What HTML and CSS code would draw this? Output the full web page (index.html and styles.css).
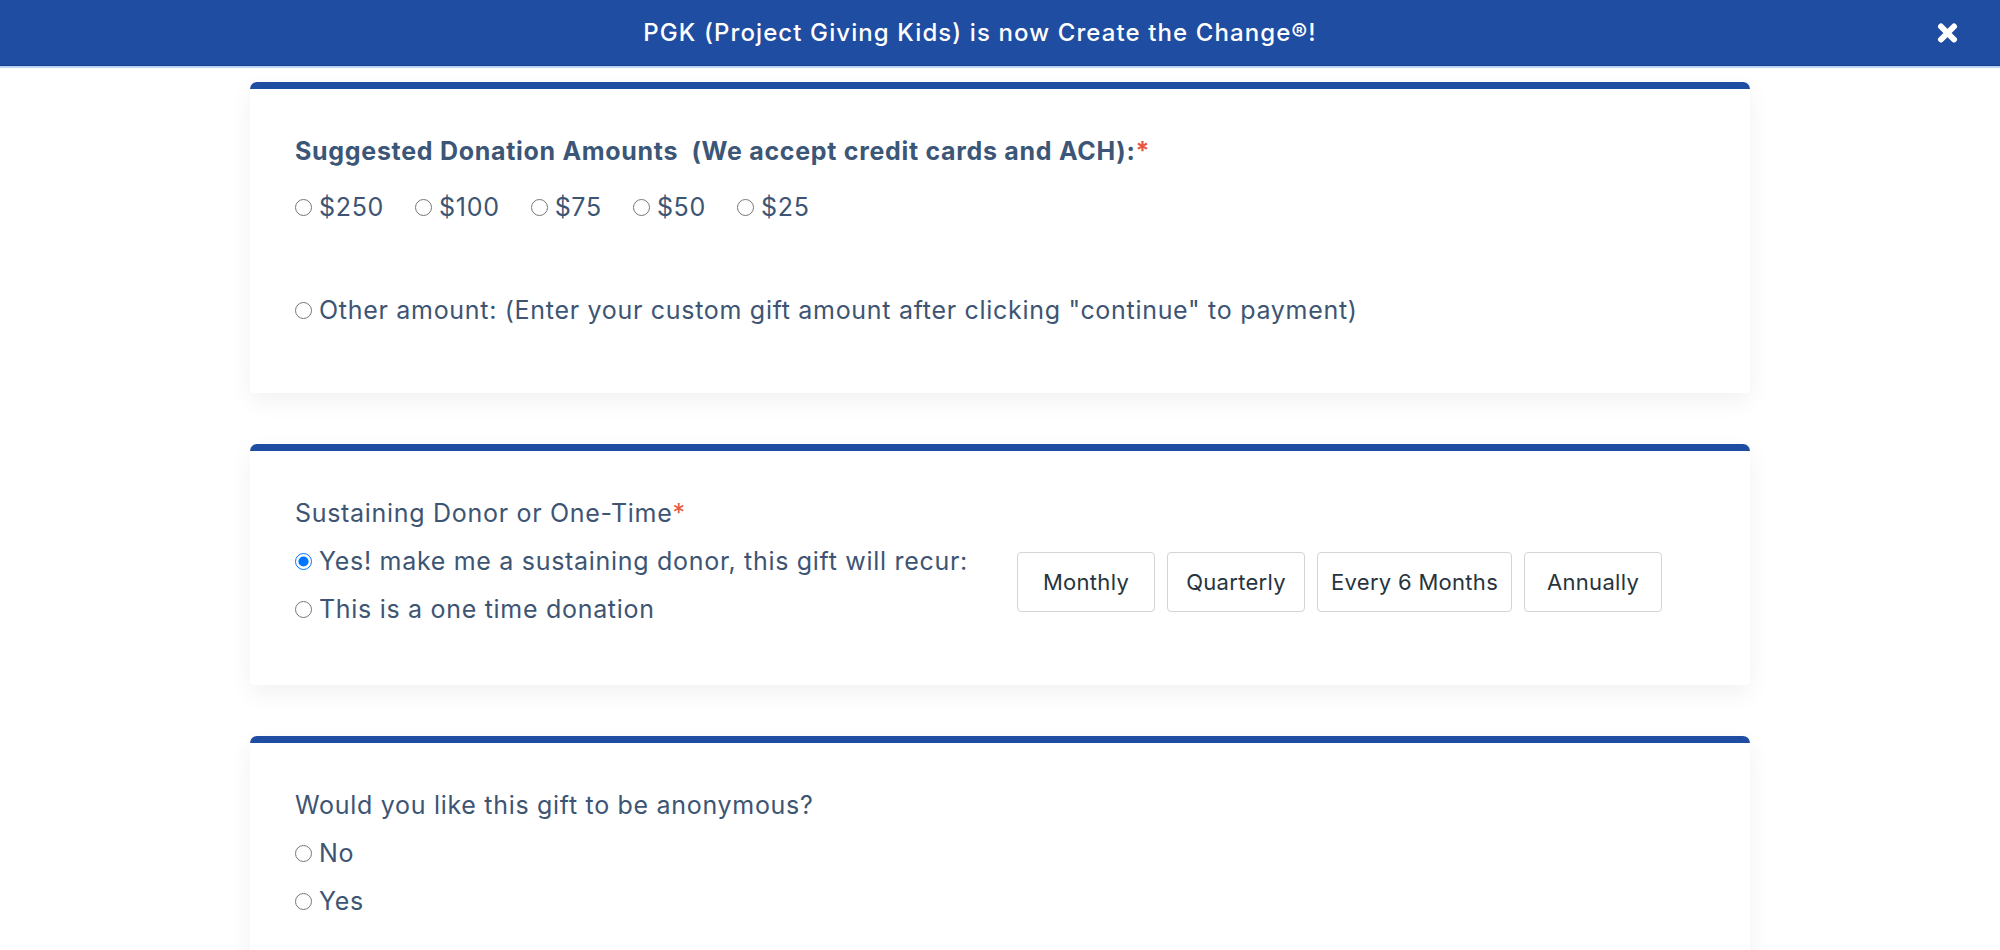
FILE: index.html
```html
<!DOCTYPE html>
<html lang="en">
<head>
<meta charset="utf-8">
<title>Donation</title>
<link rel="stylesheet" href="styles.css">
</head>
<body>
<header class="banner">
  <p class="banner-text">PGK (Project Giving Kids) is now Create the Change®!</p>
  <button class="banner-close" aria-label="Close">
    <svg width="21" height="20" viewBox="0 0 21 20"><path d="M4 3.5 L17 16.5 M17 3.5 L4 16.5" stroke="#fff" stroke-width="6" stroke-linecap="round" fill="none"/></svg>
  </button>
</header>
<main class="form">
  <section class="card card-amounts">
    <h2 class="card-title">Suggested Donation Amounts&nbsp; (We accept credit cards and ACH):<span class="req">*</span></h2>
    <div class="amount-row">
      <label class="opt"><input type="radio" name="amt"><span>$250</span></label>
      <label class="opt"><input type="radio" name="amt"><span>$100</span></label>
      <label class="opt"><input type="radio" name="amt"><span>$75</span></label>
      <label class="opt"><input type="radio" name="amt"><span>$50</span></label>
      <label class="opt"><input type="radio" name="amt"><span>$25</span></label>
    </div>
    <label class="opt opt-other"><input type="radio" name="amt"><span>Other amount: (Enter your custom gift amount after clicking "continue" to payment)</span></label>
  </section>

  <section class="card">
    <p class="label">Sustaining Donor or One-Time<span class="req">*</span></p>
    <div class="recur">
      <div class="recur-options">
        <label class="opt"><input type="radio" name="sus" checked><span>Yes! make me a sustaining donor, this gift will recur:</span></label>
        <label class="opt"><input type="radio" name="sus"><span>This is a one time donation</span></label>
      </div>
      <div class="freq">
        <button class="freq-btn">Monthly</button>
        <button class="freq-btn">Quarterly</button>
        <button class="freq-btn">Every 6 Months</button>
        <button class="freq-btn">Annually</button>
      </div>
    </div>
  </section>

  <section class="card">
    <p class="label">Would you like this gift to be anonymous?</p>
    <label class="opt"><input type="radio" name="anon"><span>No</span></label>
    <label class="opt"><input type="radio" name="anon"><span>Yes</span></label>
  </section>
</main>
</body>
</html>
```

FILE: styles.css
```css
* { box-sizing: border-box; }

body {
  margin: 0;
  background: #fff;
  font-family: Inter, "Open Sans", sans-serif;
  color: #3d5573;
}

.banner {
  display: flex;
  align-items: center;
  height: 66px;
  padding: 0 42px 0 23px;
  background: #1f4da2;
  border-bottom: 1px solid #17408c;
  box-shadow: 0 2px 0 #bcd6f6;
}

.banner-text {
  flex: 1;
  margin: 0;
  text-align: center;
  color: #fff;
  font-size: 24px;
  font-weight: 500;
  letter-spacing: 1.1px;
}

.banner-close {
  display: flex;
  padding: 0;
  border: 0;
  background: none;
  cursor: pointer;
}

.form {
  width: 1500px;
  margin: 16px auto 0;
  display: flex;
  flex-direction: column;
  gap: 51px;
}

.card {
  background: #fff;
  border-top: 7px solid #1f4da2;
  border-radius: 7px 7px 4px 4px;
  padding: 38px 45px 52px;
  box-shadow: 0 8px 24px rgba(0, 0, 0, 0.06);
}

.card-amounts { padding-bottom: 59px; }

.card-title {
  margin: 0;
  line-height: 48px;
  font-size: 25px;
  font-weight: 700;
  letter-spacing: 0.7px;
  color: #3c5677;
}

.label {
  margin: 0;
  line-height: 48px;
  font-size: 25px;
  letter-spacing: 0.7px;
}

.req { color: #e8583f; }

.opt {
  display: flex;
  align-items: center;
  gap: 7px;
  height: 48px;
  font-size: 25px;
  letter-spacing: 0.7px;
}

.opt input {
  width: 17px;
  height: 17px;
  margin: 0;
}

.amount-row {
  display: flex;
  gap: 31px;
  margin-top: 8px;
}

.opt-other { margin-top: 55px; }

.recur {
  display: flex;
  align-items: flex-start;
}

.recur-options { flex: 0 0 722px; }

.freq {
  display: flex;
  gap: 12px;
  margin-top: 15px;
}

.freq-btn {
  min-width: 138px;
  height: 60px;
  padding: 0 13px;
  border: 1px solid #d4d4d4;
  border-radius: 4px;
  background: #fff;
  font-family: Inter, "Open Sans", sans-serif;
  font-size: 22px;
  letter-spacing: 0.3px;
  color: #27343d;
}
```
